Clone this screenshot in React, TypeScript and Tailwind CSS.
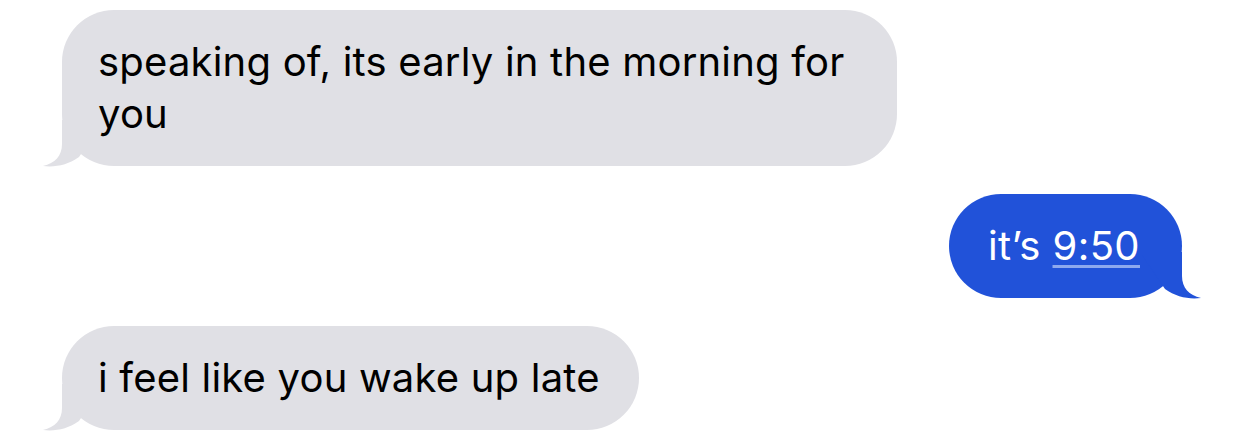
import React from 'react';

function Tail({ side, color }: { side: 'left' | 'right'; color: string }) {
  // tail hangs off the bottom corner of a bubble
  const flip = side === 'right';
  return (
    <svg
      width="60"
      height="50"
      viewBox="-20 -48 60 50"
      className={
        flip
          ? 'absolute bottom-[-2px] right-[-20px] -scale-x-100'
          : 'absolute bottom-[-2px] left-[-20px]'
      }
    >
      <path
        d="M0 -46 L0 -22 C0 -10 -7 -3 -19 0 C-7 1.5 6 -1 17 -9 L42 -46 Z"
        fill={color}
      />
    </svg>
  );
}

function Incoming({ text, width }: { text: string; width?: string }) {
  return (
    <div className="flex justify-start">
      <div
        className={`relative rounded-[52px] bg-[#e0e0e5] pl-[36px] pr-[39px] pt-[26px] pb-[26px] text-[40px] leading-[52px] tracking-[0.2px] text-black ${width ?? ''}`}
      >
        <Tail side="left" color="#e0e0e5" />
        <span className="relative">{text}</span>
      </div>
    </div>
  );
}

export default function App() {
  return (
    <div
      className="w-[1242px] h-[447px] overflow-hidden bg-white pt-[10px] pl-[62px] pr-[60px] flex flex-col gap-[28px]"
      style={{ fontFamily: 'Inter, "Noto Sans", sans-serif' }}
    >
      <Incoming text="speaking of, its early in the morning for you" width="w-[835px]" />

      <div className="flex justify-end">
        <div className="relative rounded-[52px] bg-[#2152d9] pl-[39px] pr-[42px] pt-[26px] pb-[26px] text-[40px] leading-[52px] tracking-[0.4px] text-white">
          <Tail side="right" color="#2152d9" />
          <span className="relative">
            it’s{' '}
            <span className="underline decoration-[#8ea9ee] decoration-[3px] underline-offset-[5px]">9:50</span>
          </span>
        </div>
      </div>

      <Incoming text="i feel like you wake up late" />
    </div>
  );
}
